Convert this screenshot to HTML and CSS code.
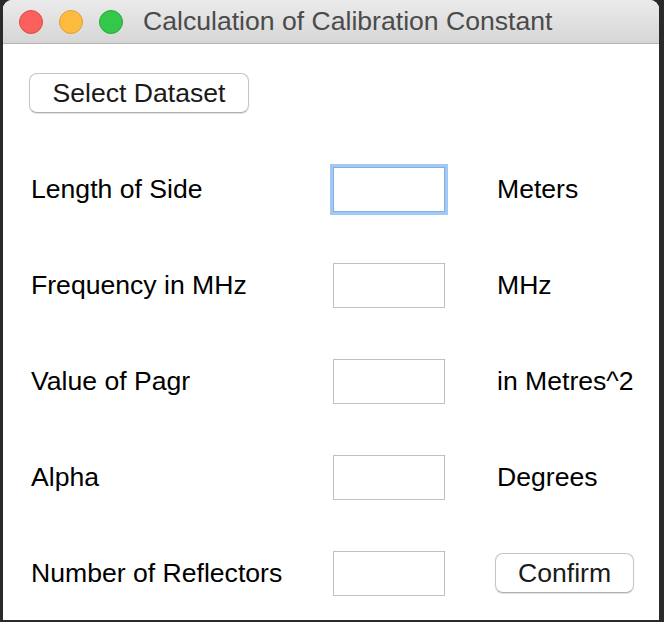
FILE: index.html
```html
<!DOCTYPE html>
<html>
<head>
<meta charset="utf-8">
<link rel="stylesheet" href="styles.css">
</head>
<body>
<div class="window">
  <div class="titlebar">
    <span class="light red"></span>
    <span class="light yellow"></span>
    <span class="light green"></span>
    <span class="title">Calculation of Calibration Constant</span>
  </div>
  <div class="content">
    <button class="btn select">Select Dataset</button>
    <div class="form">
      <div class="label">Length of Side</div>
      <input class="field focused" type="text">
      <div class="unit">Meters</div>

      <div class="label">Frequency in MHz</div>
      <input class="field" type="text">
      <div class="unit">MHz</div>

      <div class="label">Value of Pagr</div>
      <input class="field" type="text">
      <div class="unit">in Metres^2</div>

      <div class="label">Alpha</div>
      <input class="field" type="text">
      <div class="unit">Degrees</div>

      <div class="label">Number of Reflectors</div>
      <input class="field" type="text">
      <div class="unit"><button class="btn confirm">Confirm</button></div>
    </div>
  </div>
</div>
</body>
</html>
```

FILE: styles.css
```css
html, body {
  margin: 0;
  padding: 0;
  background: #2a2a2c;
  height: 622px;
  overflow: hidden;
}

.window {
  margin-left: 3px;
  width: 656px;
  height: 620px;
  background: #ffffff;
  border-radius: 9px 9px 0 0;
  overflow: hidden;
  font-family: "Liberation Sans", Arial, sans-serif;
  font-size: 26.6px;
  color: #000;
}

.titlebar {
  height: 43px;
  border-bottom: 1px solid #b4b4b4;
  background: linear-gradient(#ebebeb, #d6d6d6);
  display: flex;
  align-items: center;
  padding-left: 16px;
  box-sizing: content-box;
}

.light {
  width: 22px;
  height: 22px;
  border-radius: 50%;
  margin-right: 16px;
  flex: none;
}

.red { background: #fc605c; border: 1px solid #de4a45; }
.yellow { background: #fdbc40; border: 1px solid #dea034; }
.green { background: #34c84a; border: 1px solid #27aa36; }

.title {
  margin-left: 4px;
  color: #4b4b4b;
  font-size: 26.6px;
  white-space: nowrap;
}

.content {
  padding: 29px 0 0 26px;
}

.btn {
  font-family: "Liberation Sans", Arial, sans-serif;
  font-size: 26.6px;
  color: #1a1a1a;
  background: #ffffff;
  border: 1px solid #c6c6c6;
  border-bottom-color: #b0b0b0;
  border-radius: 8px;
  box-shadow: 0 1px 1px rgba(0,0,0,0.12);
  padding: 0;
  height: 40px;
  display: block;
}

.select {
  width: 220px;
}

.form {
  margin-top: 28px;
  display: grid;
  grid-template-columns: 304px 112px auto;
  grid-template-rows: repeat(5, 96px);
  align-items: center;
}

.label {
  padding-left: 2px;
  white-space: nowrap;
}

.field {
  width: 112px;
  height: 45px;
  box-sizing: border-box;
  border: 1px solid #bfbfbf;
  margin: 0;
  padding: 0;
  background: #fff;
  outline: none;
}

.field.focused {
  border-color: #86aee0;
  box-shadow: 0 0 0 3px #a2c9f6;
}

.unit {
  white-space: nowrap;
  padding-left: 52px;
}

.confirm {
  width: 139px;
  margin-left: -2px;
}
```
